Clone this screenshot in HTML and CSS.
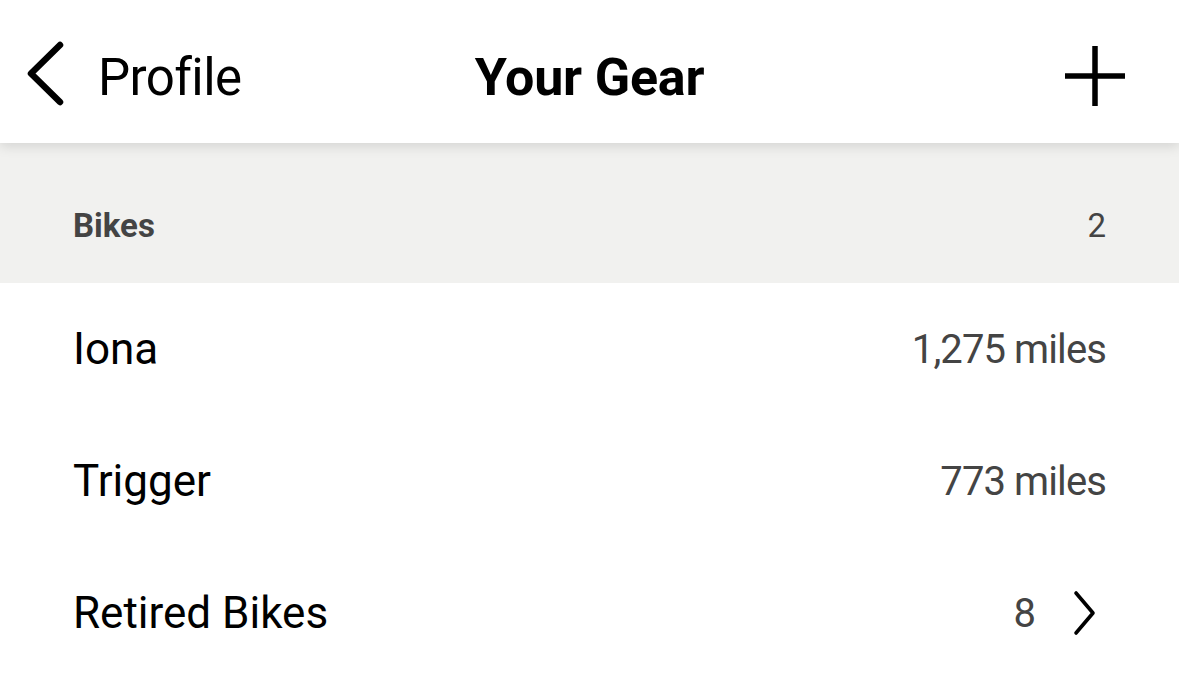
FILE: index.html
```html
<!doctype html>
<html lang="en">
  <head>
    <meta charset="UTF-8" />
    <meta name="viewport" content="width=device-width, initial-scale=1.0" />
    <title>Your Gear</title>
    <link rel="stylesheet" href="styles.css">
  </head>
  <body>
    <header class="top-bar">
      <a class="back" href="#">
        <svg class="back-icon" width="42" height="68" viewBox="0 0 42 68" fill="none">
          <path d="M36 5 L7 33.5 L36 62" stroke="#000" stroke-width="6.5" stroke-linecap="round" stroke-linejoin="round" />
        </svg>
        <span>Profile</span>
      </a>
      <h1 class="title">Your Gear</h1>
      <div class="actions">
        <svg class="add-icon" width="60" height="60" viewBox="0 0 60 60" fill="none">
          <path d="M30 0 V60 M0 30 H60" stroke="#000" stroke-width="5.5" />
        </svg>
      </div>
    </header>

    <section class="gear-section">
      <div class="section-head">
        <span class="section-name">Bikes</span>
        <span class="section-count">2</span>
      </div>

      <ul class="gear-list">
        <li class="gear-row">
          <span class="gear-name">Iona</span>
          <span class="gear-value">1,275 miles</span>
        </li>
        <li class="gear-row">
          <span class="gear-name">Trigger</span>
          <span class="gear-value">773 miles</span>
        </li>
        <li class="gear-row">
          <span class="gear-name">Retired Bikes</span>
          <span class="gear-more">
            <span class="gear-value">8</span>
            <svg class="more-icon" width="34" height="48" viewBox="0 0 34 48" fill="none">
              <path d="M4 4 L21 24 L4 44" stroke="#000" stroke-width="3.6" stroke-linecap="round" stroke-linejoin="round" />
            </svg>
          </span>
        </li>
      </ul>
    </section>
  </body>
</html>
```

FILE: styles.css
```css
* {
  margin: 0;
  padding: 0;
  box-sizing: border-box;
}

body {
  font-family: Roboto, 'Liberation Sans', sans-serif;
  background: #fff;
  color: #000;
}

.top-bar {
  position: relative;
  z-index: 1;
  height: 143px;
  padding-top: 12px;
  display: grid;
  grid-template-columns: 1fr auto 1fr;
  align-items: center;
  background: #fff;
  box-shadow: 0 3px 12px rgba(0, 0, 0, 0.13);
}

.back {
  display: flex;
  align-items: center;
  gap: 32px;
  padding-left: 24px;
  color: #000;
  text-decoration: none;
  font-size: 51px;
  letter-spacing: -0.6px;
}

.back-icon {
  margin-bottom: 8px;
}

.title {
  font-size: 52px;
  font-weight: 700;
  letter-spacing: -0.2px;
}

.actions {
  display: flex;
  justify-content: flex-end;
  padding-right: 54px;
}

.add-icon {
  margin-bottom: 3px;
}

.gear-section {
  background: #fff;
}

.section-head {
  height: 140px;
  padding: 24px 73px 0;
  display: flex;
  align-items: center;
  justify-content: space-between;
  background: #f1f1ef;
  color: #444;
  font-size: 33px;
}

.section-name {
  font-weight: 700;
}

.gear-list {
  list-style: none;
}

.gear-row {
  height: 132px;
  padding: 0 73px;
  display: flex;
  align-items: center;
  justify-content: space-between;
}

.gear-name {
  font-size: 44px;
}

.gear-value {
  font-size: 40px;
  letter-spacing: -0.9px;
  color: #444;
}

.gear-more {
  display: flex;
  align-items: center;
  gap: 37px;
}
```
